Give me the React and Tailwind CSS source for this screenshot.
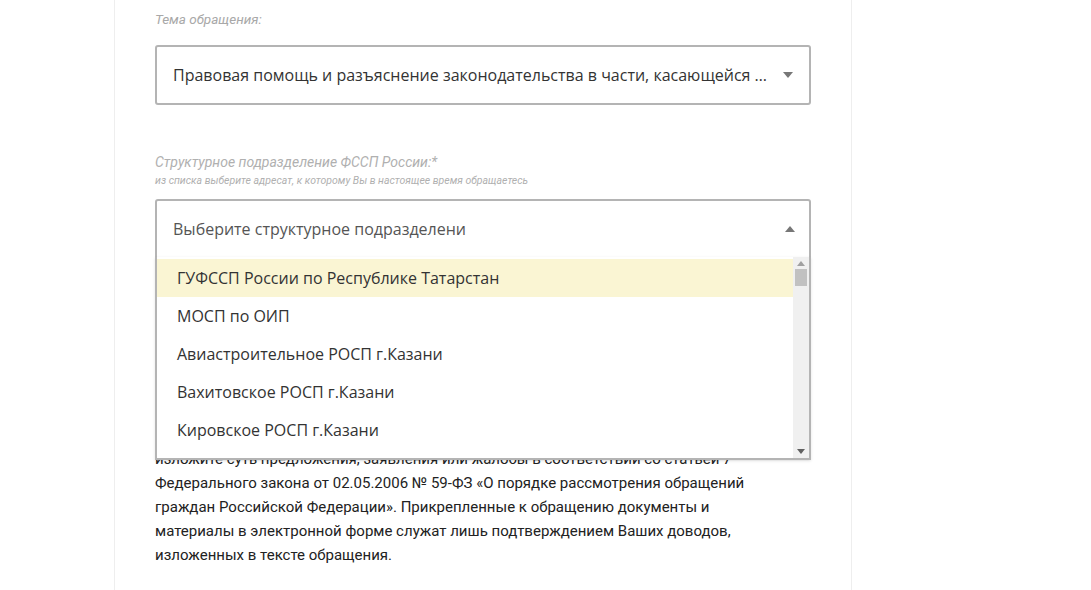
export default function App() {
  const items = ["ГУФССП России по Республике Татарстан","МОСП по ОИП","Авиастроительное РОСП г.Казани","Вахитовское РОСП г.Казани","Кировское РОСП г.Казани"];
  const Caret = ({up}) => (
    <svg width="10" height="6" viewBox="0 0 10 6" className="shrink-0"><path d={up ? "M0 6L5 0L10 6Z" : "M0 0L10 0L5 6Z"} fill="#777"/></svg>
  );
  return (
    <div className="w-[1091px] h-[590px] bg-white overflow-hidden" style={{fontFamily:"'Open Sans', sans-serif"}}>
      <div className="ml-[114px] w-[738px] h-[590px] border-x border-[#eeeeee] px-[40px]">
        <div className="pt-[10px] text-[13.5px] italic text-[#a8a8a8] leading-[18px]" style={{fontFamily:"Roboto, sans-serif"}}>Тема обращения:</div>
        <div className="mt-[17px] h-[60px] border-2 border-[#b4b4b4] rounded-[3px] flex items-center pl-[16px] pr-[16px] gap-3">
          <div className="flex-1 truncate text-[16px] text-[#333]">Правовая помощь и разъяснение законодательства в части, касающейся деятельности</div>
          <Caret />
        </div>
        <div className="mt-[48px] text-[14px] italic text-[#b0b0b0] leading-[18px]" style={{fontFamily:"Roboto, sans-serif"}}>Структурное подразделение ФССП России:*</div>
        <div className="mt-[3px] text-[10.5px] italic text-[#b0b0b0] leading-[14px]" style={{fontFamily:"Roboto, sans-serif"}}>из списка выберите адресат, к которому Вы в настоящее время обращаетесь</div>
        <div className="relative mt-[11px]">
          <div className="h-[60px] border-2 border-[#b4b4b4] rounded-t-[3px] flex items-center pl-[16px] pr-[14px]">
            <div className="flex-1 text-[16px] text-[#555]">Выберите структурное подразделени</div>
            <Caret up />
          </div>
          <div className="absolute left-0 right-0 top-[58px] h-[203px] bg-white border-2 border-t-0 border-[#b4b4b4] flex z-10 shadow-sm">
            <div className="flex-1 pt-[2px]">
              {items.map((t,i)=>(
                <div key={i} className={"h-[38px] flex items-center pl-[20px] text-[16px] text-[#333] " + (i===0 ? "bg-[#faf5d3]" : "")}>{t}</div>
              ))}
            </div>
            <div className="w-[16px] bg-[#f0f0f0] flex flex-col items-center py-[4px]">
              <svg width="8" height="5" viewBox="0 0 8 5"><path d="M0 5L4 0L8 5Z" fill="#a0a0a0"/></svg>
              <div className="w-[12px] h-[17px] bg-[#c1c1c1] mt-[3px]"></div>
              <div className="flex-1"></div>
              <svg width="8" height="5" viewBox="0 0 8 5"><path d="M0 0L8 0L4 5Z" fill="#606060"/></svg>
            </div>
          </div>
          <div className="pt-[188px] text-[15px] leading-[24px] text-[#222]" style={{fontFamily:"Roboto, sans-serif"}}>
            <p className="w-[622px]">изложите суть предложения, заявления или жалобы в соответствии со статьей 7 Федерального закона от 02.05.2006 № 59-ФЗ «О порядке рассмотрения обращений граждан Российской Федерации». Прикрепленные к обращению документы и материалы в электронной форме служат лишь подтверждением Ваших доводов, изложенных в тексте обращения.</p>
            <div className="mt-[20px] text-[13.5px] italic text-[#b0b0b0]">Текст обращения:*</div>
          </div>
        </div>
      </div>
    </div>
  );
}
